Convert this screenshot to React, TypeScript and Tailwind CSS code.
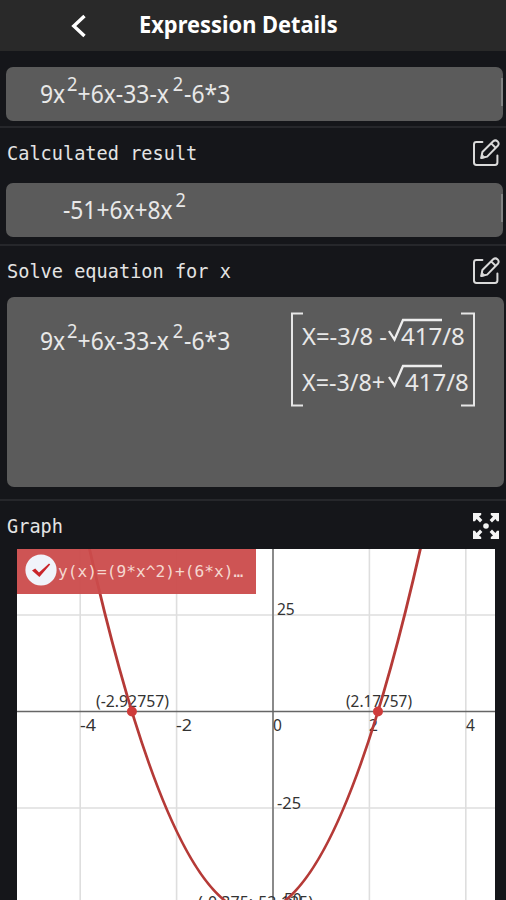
import type { ReactNode } from "react"
import clsx from "clsx"

const ORIGIN_X = 256
const ORIGIN_Y = 162.5
const UNIT_X = 48.2
const UNIT_Y = 3.86

const toX = (x: number) => ORIGIN_X + x * UNIT_X
const toY = (y: number) => ORIGIN_Y - y * UNIT_Y
const f = (x: number) => 8 * x * x + 6 * x - 51

// a parabola is exactly one quadratic bezier, control point where the tangents meet
function curvePath() {
    const a = -4.375
    const b = 3.625
    const mid = (a + b) / 2
    const slope = 16 * a + 6
    return `M${toX(a)} ${toY(f(a))} Q${toX(mid)} ${toY(f(a) + slope * (mid - a))} ${toX(b)} ${toY(f(b))}`
}

function EditIcon() {
    return (
        <svg width="28" height="28" viewBox="0 0 28 28" fill="none" stroke="#dadada" strokeWidth="2" strokeLinecap="round" strokeLinejoin="round">
            <path d="M10.4 3H4.4Q2 3 2 5.4V23.6Q2 26 4.4 26H23Q25.4 26 25.4 23.6V16.6" />
            <path d="M9.2 19L10.4 13L21.2 2.3Q23.4 0.4 25.6 2.4Q27.6 4.6 25.8 6.8L15.2 17.6Z M19.4 4.6L23.6 8.8" />
            <path d="M9.2 19L10 15.4L12.8 18.2Z" fill="#dadada" strokeWidth="1" />
        </svg>
    )
}

function ExpandIcon() {
    return (
        <svg width="28" height="28" viewBox="0 0 28 28" fill="#f4f4f4">
            <path id="corner" d="M1 1H9.2V3L7 4.6L10.4 8L8 10.4L4.6 7L3 9.2H1Z" />
            <use href="#corner" transform="rotate(90 14 14)" />
            <use href="#corner" transform="rotate(180 14 14)" />
            <use href="#corner" transform="rotate(270 14 14)" />
            <circle cx="14" cy="14" r="2.8" />
        </svg>
    )
}

function SectionTitle({ title, children }: { title: string, children: ReactNode }) {
    return (
        <div className="flex h-[54px] shrink-0 items-center justify-between border-t-2 border-[#26272b] pr-[6px] pl-[7px]">
            <span className="font-['DejaVu_Sans_Mono',monospace] text-[18.6px] text-[#e4e4e4]">{title}</span>
            <div className="-mt-[3px]">{children}</div>
        </div>
    )
}

function Sup({ className }: { className?: string }) {
    return <span className={clsx("relative -top-[12px] text-[19.5px]", className)}>2</span>
}

function Expression() {
    return (
        <span className="inline-block origin-left scale-x-[0.935] whitespace-nowrap">
            9x<Sup className="ml-[2px]" />+6x-33-x<Sup className="mr-[1px] ml-[4px]" />-6*3
        </span>
    )
}

function Field({ children, className }: { children: ReactNode, className: string }) {
    return (
        <div className={clsx("relative mr-[3px] ml-[6px] flex h-[54px] shrink-0 items-center rounded-[7px] bg-[#5b5b5b] text-[24.5px]", className)}>
            {children}
            <div className="absolute top-[11px] right-0 h-[28px] w-[2px] bg-[#828383]" />
        </div>
    )
}

function Root({ className, children }: { className: string, children: ReactNode }) {
    return (
        <span className={clsx("relative h-[46px]", className)}>
            <svg className="absolute top-0 left-0" width="56" height="30" fill="none" stroke="#eeeeee" strokeWidth="2.3">
                <path d="M1 18L6.5 26.5L15 7H54" />
            </svg>
            {children}
        </span>
    )
}

function Solutions() {
    return (
        <div className="relative h-[95px] w-[186px] pt-[1px] pl-[12px] text-[24px] leading-[46px]">
            <svg className="absolute top-0 left-0" width="186" height="95" fill="none" stroke="#e6e6e6" strokeWidth="2">
                <path d="M13 1.5H2V93.5H13" />
                <path d="M171 1.5H184V93.5H171" />
            </svg>
            <div className="flex h-[46px] items-center whitespace-nowrap">
                <span className="w-[86px]"><span className="inline-block origin-left scale-x-[0.99]">X=-3/8 -</span></span>
                <Root className="pl-[13px]">417/8</Root>
            </div>
            <div className="flex h-[46px] items-center whitespace-nowrap">
                <span className="w-[86px]"><span className="inline-block origin-left scale-x-[0.97]">X=-3/8+</span></span>
                <Root className="pl-[17px]">417/8</Root>
            </div>
        </div>
    )
}

function Graph() {
    return (
        <div className="relative -mt-[4px] ml-[17px] h-[351px] w-[478px] shrink-0 overflow-hidden bg-white">
            <svg width="478" height="351" viewBox="0 0 478 351">
                <g stroke="#dedede" strokeWidth="1.6">
                    {[-4, -2, 2, 4].map((x) => <line key={x} x1={toX(x)} x2={toX(x)} y1="0" y2="351" />)}
                    {[25, -25].map((y) => <line key={y} y1={toY(y)} y2={toY(y)} x1="0" x2="478" />)}
                </g>
                <line x1={ORIGIN_X} x2={ORIGIN_X} y1="0" y2="351" stroke="#8a8a8a" strokeWidth="2" />
                <line y1={ORIGIN_Y} y2={ORIGIN_Y} x1="0" x2="478" stroke="#666666" strokeWidth="1.4" />
                <g fontFamily="Noto Sans, sans-serif" fontSize="15.5" fill="#333333">
                    <text x="63" y="182" textLength="16" lengthAdjust="spacingAndGlyphs">-4</text>
                    <text x="159" y="182" textLength="16" lengthAdjust="spacingAndGlyphs">-2</text>
                    <text x="256" y="182">0</text>
                    <text x="352" y="182">2</text>
                    <text x="449" y="182">4</text>
                    <text x="260" y="66">25</text>
                    <text x="260" y="260" textLength="24" lengthAdjust="spacingAndGlyphs">-25</text>
                    <text x="79" y="158" textLength="73" lengthAdjust="spacingAndGlyphs">(-2.92757)</text>
                    <text x="329" y="158" textLength="66" lengthAdjust="spacingAndGlyphs">(2.17757)</text>
                    <text x="181" y="359" textLength="115" lengthAdjust="spacingAndGlyphs">(-0.375;-52.125)</text>
                    <text x="267" y="355.5">50</text>
                </g>
                <path d={curvePath()} fill="none" stroke="#b53a37" strokeWidth="2.9" />
                <circle cx={toX(-2.92757)} cy={ORIGIN_Y} r="5" fill="#cf3b3a" />
                <circle cx={toX(2.17757)} cy={ORIGIN_Y} r="5" fill="#cf3b3a" />
            </svg>
            <div className="absolute top-0 left-0 flex h-[45px] w-[239px] items-center bg-[#cb4b4b]/95 pl-[8px]">
                <svg className="-mt-[3px] shrink-0" width="32" height="32" viewBox="0 0 32 32">
                    <circle cx="16" cy="16" r="15.6" fill="#f0f3fa" />
                    <path d="M7 16.6L10.2 14.6L14 18.4L24 9.4L25.2 10.4L14.4 23Z" fill="#c9252b" />
                </svg>
                <span className="mt-[2px] ml-px font-['DejaVu_Sans_Mono',monospace] text-[16.2px] whitespace-nowrap text-[#f5d8d0]">y(x)=(9*x^2)+(6*x)…</span>
            </div>
        </div>
    )
}

export default function ExpressionDetailsPage() {
    return (
        <main className="flex h-[900px] w-[506px] flex-col overflow-hidden bg-[#15161a] font-['Noto_Sans',sans-serif] text-[#e8e8e8]">
            <header className="flex h-[51px] shrink-0 items-center bg-[#292929] text-white">
                <svg className="ml-[70px]" width="18" height="24" viewBox="0 0 18 24" fill="none" stroke="white" strokeWidth="3.4">
                    <path d="M14.5 2L3.8 12L14.5 22" />
                </svg>
                <h1 className="-mt-[4px] ml-[51px] origin-left scale-x-[0.91] text-[24px] font-bold whitespace-nowrap">Expression Details</h1>
            </header>
            <Field className="mt-4 mb-[5px] pl-[34px]">
                <Expression />
            </Field>
            <SectionTitle title="Calculated result"><EditIcon /></SectionTitle>
            <Field className="mt-[3px] mb-[7px] pl-[57px]">
                <span className="inline-block origin-left scale-x-[0.93] whitespace-nowrap">-51+6x+8x<Sup className="ml-[3px]" /></span>
            </Field>
            <SectionTitle title="Solve equation for x"><EditIcon /></SectionTitle>
            <div className="-mt-px mr-[2px] mb-[12px] ml-[7px] flex h-[190px] shrink-0 justify-between rounded-[7px] bg-[#5b5b5b] pt-[15px] pr-[28px] pl-[33px] text-[24.5px]">
                <div className="w-[220px] pt-[11px]"><Expression /></div>
                <Solutions />
            </div>
            <SectionTitle title="Graph"><ExpandIcon /></SectionTitle>
            <Graph />
        </main>
    )
}
